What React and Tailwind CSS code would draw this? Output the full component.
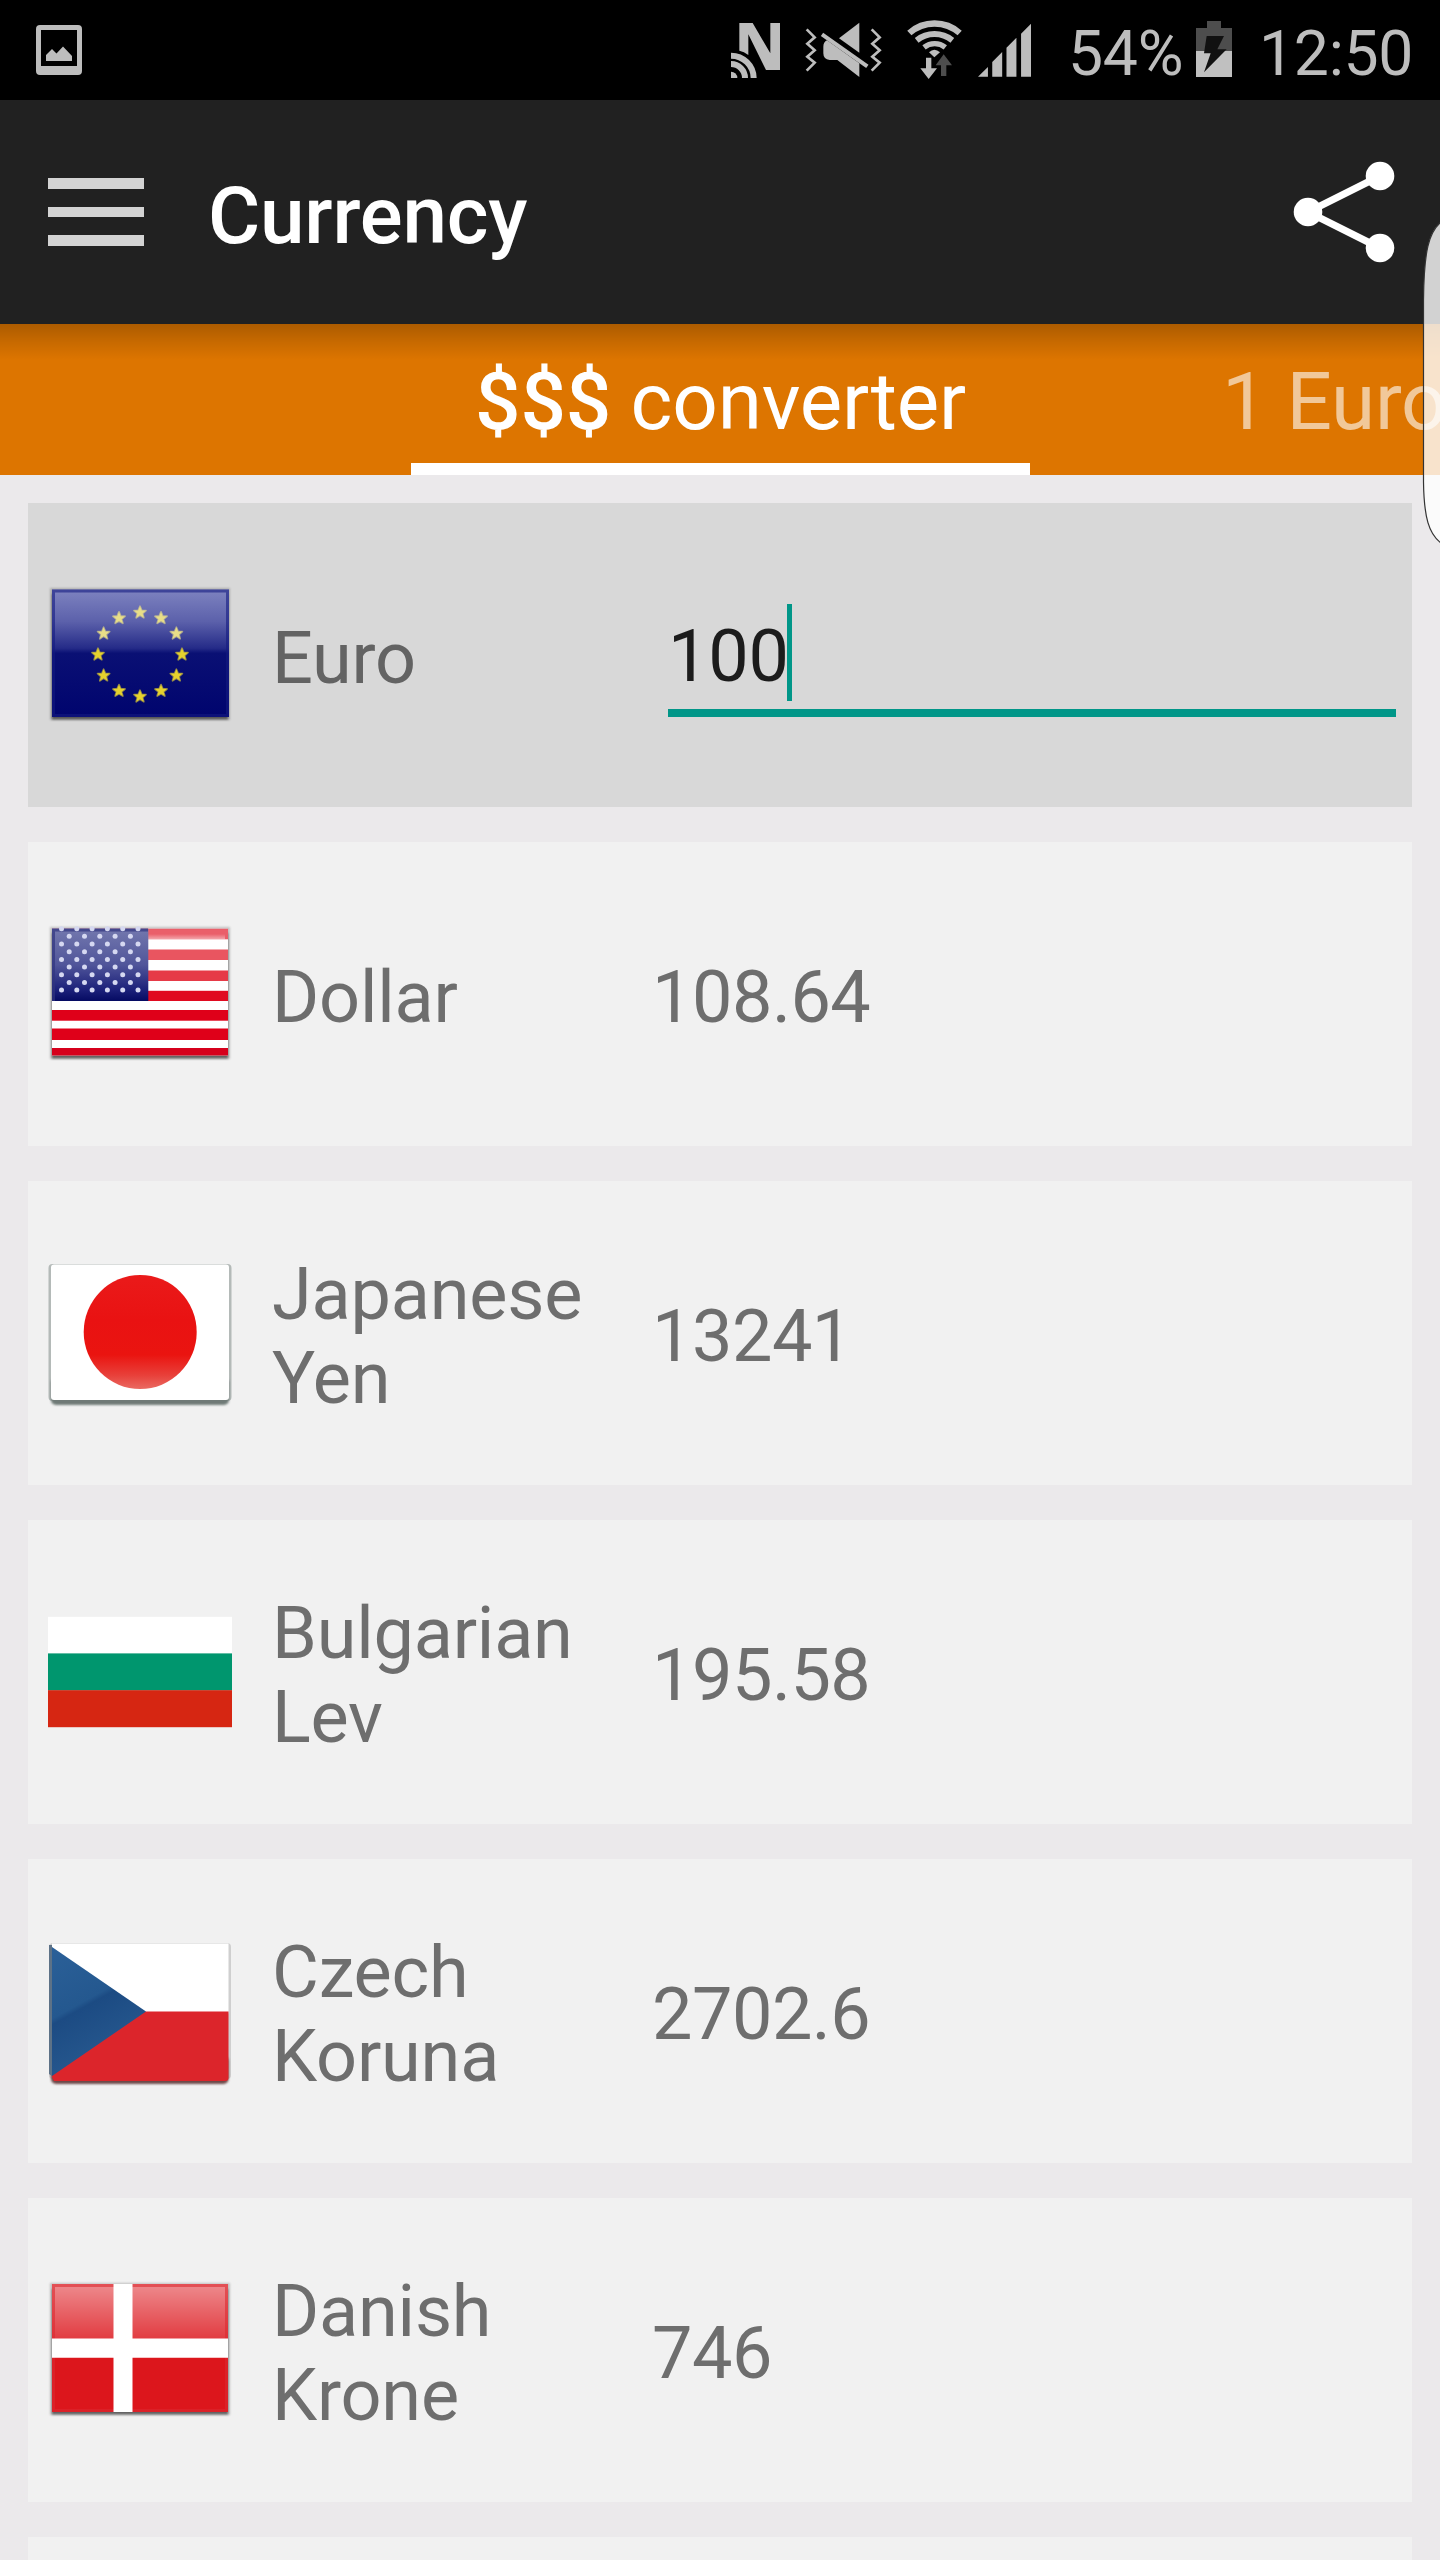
import { useState } from "react";

function ScreenshotIcon() {
  return (
    <svg className="h-[50px] w-[46px]" viewBox="0 0 46 50">
      <path fill="#bdbdbd" fillRule="evenodd" d="M4 0H42Q46 0 46 4V46Q46 50 42 50H4Q0 50 0 46V4Q0 0 4 0ZM5 5V41H41V5Z" />
      <path fill="#bdbdbd" d="M10 36V30L16 24L20.500 28.500L27 21.500L36 31V36Z" />
    </svg>
  );
}

function NfcIcon() {
  return (
    <svg className="h-[100px] w-[49px]" viewBox="93 0 147 300" fill="#bdbdbd">
      <path d="M118 69H158L211 160V69H240V210H198L145 103V165Q132 155 118 152Z" />
      <path d="M93 215A19 19 0 0 1 112 234H93Z" />
      <path d="M93 192A42 42 0 0 1 135 234M93 167A68 68 0 0 1 161 234" fill="none" stroke="#bdbdbd" strokeWidth="18" />
    </svg>
  );
}

function MuteIcon() {
  return (
    <svg className="h-[100px] w-[77px]" viewBox="314 0 231 300" fill="#bdbdbd">
      <path d="M319 88L343 112L321 131L343 151L321 170L343 188L319 212M514 88L538 112L516 131L538 151L516 170L538 188L514 212" fill="none" stroke="#bdbdbd" strokeWidth="8" />
      <path d="M477 68V158L416 115Z" />
      <path d="M380 121L477 190V231L411 180H388Q369 178 369 160V140Q369 126 380 121Z" />
      <path d="M365 103L501 199" stroke="#bdbdbd" strokeWidth="12" />
    </svg>
  );
}

function WifiIcon() {
  return (
    <svg className="h-[100px] w-[55px]" viewBox="620 0 165 300" fill="#bdbdbd">
      <g fill="none" stroke="#bdbdbd" strokeWidth="19">
        <path d="M627 99A114 114 0 0 1 778 99" />
        <path d="M649 121A86 86 0 0 1 756 121" strokeWidth="18" />
        <path d="M671 142A52 52 0 0 1 735 142" strokeWidth="16" />
      </g>
      <path d="M686 157Q702 142 719 157L702 172Z" />
      <path d="M677 173H693V205H710L685 237L660 205H677Z" />
      <path fill="#4d4d4d" d="M730 163L755 196H738V228H722V196H706Z" />
    </svg>
  );
}

function SignalIcon() {
  return (
    <svg className="h-[100px] w-[53px]" viewBox="833 0 160 300" fill="#bdbdbd">
      <path d="M833 231L863 201V231ZM876 231V186L906 156V231ZM919 231V143L949 113V231ZM963 231V101L993 71V231Z" />
    </svg>
  );
}

function BatteryIcon() {
  return (
    <svg className="h-[100px] w-[36px]" viewBox="468 0 108 300">
      <path fill="#4d4d4d" d="M501 63H543V84H576V153H468V84H501Z" />
      <path fill="#c0c0c0" d="M468 153H576V231H468Z" />
      <path fill="#111111" d="M500 108H552L532 148H560L492 217L512 160H492Z" />
    </svg>
  );
}

function StatusBar() {
  return (
    <div className="flex h-[100px] shrink-0 items-center bg-black pl-9 text-[62.500px] text-[#bdbdbd]">
      <ScreenshotIcon />
      <div className="ml-auto flex items-center">
        <NfcIcon />
        <div className="ml-[25px] flex"><MuteIcon /></div>
        <div className="ml-[25px] flex"><WifiIcon /></div>
        <div className="ml-4 flex"><SignalIcon /></div>
        <span className="ml-[37px] w-[128px] pt-2 leading-none tracking-[-0.300px] whitespace-nowrap">54%</span>
        <BatteryIcon />
        <span className="ml-[27px] w-[181px] pt-2 leading-none tracking-[-0.300px] whitespace-nowrap">12:50</span>
      </div>
    </div>
  );
}

function AppBar() {
  return (
    <header className="flex h-[224px] shrink-0 items-center bg-[#212121] px-12">
      <button type="button" aria-label="Menu" className="flex w-24 flex-col gap-[18px]">
        <span className="h-[10.500px] w-full bg-[#d3d3d3]" />
        <span className="h-[10.500px] w-full bg-[#d3d3d3]" />
        <span className="h-[10.500px] w-full bg-[#d3d3d3]" />
      </button>
      <h1 className="ml-16 pt-2 text-[80px] leading-none font-medium tracking-[-0.200px] text-white">Currency</h1>
      <button type="button" aria-label="Share" className="-mr-[3px] ml-auto">
        <svg className="h-[102px] w-[102px]" viewBox="0 0 102 102" fill="white">
          <path d="M87 15L15 51L87 87" fill="none" stroke="white" strokeWidth="7" />
          <circle cx="15" cy="51" r="14.300" />
          <circle cx="87" cy="15" r="14.300" />
          <circle cx="87" cy="87" r="14.300" />
        </svg>
      </button>
    </header>
  );
}

function Tabs() {
  return (
    <nav className="relative flex h-[151px] shrink-0 overflow-hidden bg-[#dd7500] pl-[411px] text-[80px] leading-none whitespace-nowrap">
      <div className="absolute inset-x-0 top-0 h-9 bg-linear-to-b from-black/22 via-black/10 to-transparent" />
      <div className="w-[619px] shrink-0 border-b-[12px] border-white pt-[38px] text-center tracking-[-0.200px] text-white">
        <span className="font-medium">$$$</span> converter
      </div>
      <div className="ml-[192px] shrink-0 pt-[38px] tracking-[-0.200px] text-white/60">1 Euro</div>
    </nav>
  );
}

const STAR = "M0 -6.200L1.800 -2L6 -1.900L2.600 1L3.800 5.200L0 2.800L-3.800 5.200L-2.600 1L-6 -1.900L-1.800 -2Z";

function EuFlag() {
  return (
    <>
      <defs>
        <linearGradient id="euBlue" x1="0" y1="0" x2="0" y2="1">
          <stop offset="0" stopColor="#7e83c0" />
          <stop offset="0.250" stopColor="#5c61ab" />
          <stop offset="0.460" stopColor="#252b88" />
          <stop offset="0.500" stopColor="#0a1074" />
          <stop offset="1" stopColor="#00046e" />
        </linearGradient>
      </defs>
      <rect x="4" y="9.500" width="177" height="127.500" fill="url(#euBlue)" />
      <rect x="5.500" y="11" width="174" height="124.500" fill="none" stroke="#141a80" strokeOpacity="0.600" strokeWidth="3" />
      {Array.from({ length: 12 }, (_, i) => {
        const a = (i * Math.PI) / 6;
        const x = 92 + 42 * Math.sin(a);
        const y = 74.500 - 42 * Math.cos(a);
        const fill = y < 60 ? "#e8de88" : "#e6d22e";
        return (
          <path
            key={i}
            d={STAR}
            fill={fill}
            stroke={fill}
            strokeOpacity="0.600"
            strokeWidth="1.800"
            strokeLinejoin="round"
            transform={`translate(${x} ${y})`}
          />
        );
      })}
    </>
  );
}

const RED_STRIPES = [
  [9.700, 10.600, "#ea5f6a"],
  [30.500, 10.500, "#e95560"],
  [51.500, 10.500, "#e63a47"],
  [71.800, 10.200, "#e00a20"],
  [91, 10.700, "#df0019"],
  [109.500, 11.500, "#df0019"],
  [129, 7.500, "#d6001c"],
];

function UsFlag() {
  return (
    <>
      <defs>
        <linearGradient id="canton" x1="0" y1="0" x2="0" y2="1">
          <stop offset="0" stopColor="#7378ae" />
          <stop offset="0.500" stopColor="#50559a" />
          <stop offset="0.850" stopColor="#1b2079" />
          <stop offset="1" stopColor="#050a62" />
        </linearGradient>
        <linearGradient id="stripeFade" x1="0" y1="0" x2="0" y2="1">
          <stop offset="0" stopColor="white" stopOpacity="0" />
          <stop offset="0.500" stopColor="white" stopOpacity="0" />
          <stop offset="1" stopColor="white" stopOpacity="0.450" />
        </linearGradient>
      </defs>
      <rect x="4" y="9.700" width="176" height="126.800" fill="white" />
      {RED_STRIPES.map(([y, h, fill]) => (
        <rect key={y} x="4" y={y} width="176" height={h} fill={fill} />
      ))}
      <rect x="100" y="9.700" width="77" height="10.600" fill="url(#stripeFade)" />
      <rect x="4" y="9.700" width="96.300" height="72.300" fill="url(#canton)" />
      <path d="M5.500 82V11H100" fill="none" stroke="#30357f" strokeOpacity="0.700" strokeWidth="3" />
      {Array.from({ length: 9 }, (_, row) =>
        Array.from({ length: row % 2 ? 5 : 6 }, (_, col) => (
          <circle
            key={`${row}-${col}`}
            cx={13.500 + col * 15.300 + (row % 2 ? 7.700 : 0)}
            cy={9.700 + row * 7.670}
            r="2.500"
            fill="#d5d8f1"
          />
        ))
      )}
    </>
  );
}

function JapanFlag() {
  return (
    <>
      <defs>
        <linearGradient id="sun" x1="0" y1="0" x2="0" y2="1">
          <stop offset="0" stopColor="#ea1a1a" />
          <stop offset="0.400" stopColor="#e91212" />
          <stop offset="0.700" stopColor="#ea1410" />
          <stop offset="0.880" stopColor="#e8403a" />
          <stop offset="1" stopColor="#ea6a62" />
        </linearGradient>
      </defs>
      <rect x="0.500" y="6" width="183" height="137" rx="4" fill="#b4bab8" />
      <rect x="3" y="120" width="178" height="27" rx="5" fill="#6f7a77" filter="url(#soft)" />
      <rect x="3" y="6.500" width="178" height="135.500" rx="3" fill="white" />
      <ellipse cx="92.200" cy="74" rx="56.500" ry="57" fill="url(#sun)" />
    </>
  );
}

function BulgariaFlag() {
  return (
    <>
      <rect y="19.800" width="184" height="37" fill="white" />
      <rect y="56.400" width="184" height="37" fill="#00966e" />
      <rect y="93.200" width="184" height="37" fill="#d62612" />
    </>
  );
}

function CzechFlag() {
  return (
    <>
      <defs>
        <linearGradient id="czBlue" x1="0" y1="0" x2="0.400" y2="1">
          <stop offset="0" stopColor="#2b6098" />
          <stop offset="0.480" stopColor="#24588f" />
          <stop offset="0.520" stopColor="#1c4b83" />
          <stop offset="1" stopColor="#285a90" />
        </linearGradient>
      </defs>
      <rect x="1" y="7" width="182" height="136" rx="4" fill="#cfcfcf" />
      <rect x="3" y="120" width="177.500" height="28" rx="5" fill="#6e4a48" filter="url(#soft)" />
      <path d="M1 9H4V140L1 138Z" fill="#5d7287" />
      <rect x="4" y="7.500" width="176.500" height="70" fill="white" />
      <path d="M4 75.500H180.500V142Q180.500 145 177 145H6L4 141Z" fill="#dc252b" />
      <path d="M4 11L98 75.500L4 140Z" fill="url(#czBlue)" />
    </>
  );
}

function DenmarkFlag() {
  return (
    <>
      <defs>
        {/* light falling over the top half */}
        <linearGradient id="dkGloss" x1="0" y1="0" x2="0" y2="1">
          <stop offset="0" stopColor="white" stopOpacity="0.500" />
          <stop offset="1" stopColor="white" stopOpacity="0.150" />
        </linearGradient>
      </defs>
      <rect x="4" y="9" width="176" height="128" fill="#dc161c" />
      <rect x="4" y="9" width="176" height="57" fill="url(#dkGloss)" />
      <rect x="5.500" y="10.500" width="173" height="125" fill="none" stroke="#dc2a30" strokeOpacity="0.600" strokeWidth="3" />
      <path d="M65.500 9H84.500V137H65.500ZM4 63.500H180V82.700H4Z" fill="white" />
    </>
  );
}

const ROWS = [
  { name: "Dollar", value: "108.64", Flag: UsFlag, shadow: true },
  { name: "Japanese Yen", value: "13241", Flag: JapanFlag },
  { name: "Bulgarian Lev", value: "195.58", Flag: BulgariaFlag },
  { name: "Czech Koruna", value: "2702.6", Flag: CzechFlag },
  { name: "Danish Krone", value: "746", Flag: DenmarkFlag, shadow: true },
];

function FlagImage({ Flag, shadow }) {
  return (
    <svg className="h-[150px] w-[184px] shrink-0" viewBox="0 0 184 150">
      <defs>
        <filter id="soft" x="-10%" y="-10%" width="120%" height="120%">
          <feGaussianBlur stdDeviation="1.200" />
        </filter>
      </defs>
      {shadow && (
        <>
          <rect x="2" y="8" width="180" height="132" fill="black" fillOpacity="0.200" filter="url(#soft)" />
          <rect x="4" y="14" width="176" height="125.500" fill="black" fillOpacity="0.500" filter="url(#soft)" />
        </>
      )}
      <Flag />
    </svg>
  );
}

function CurrencyRow({ name, value, Flag, shadow }) {
  return (
    <li className="flex h-[304px] shrink-0 items-center bg-[#f1f1f1] pl-5">
      <FlagImage Flag={Flag} shadow={shadow} />
      <span className="ml-10 w-[340px] pt-2">{name}</span>
      <span className="ml-10 pt-2 tracking-[-0.500px]">{value}</span>
    </li>
  );
}

export default function App() {
  const [amount] = useState("100");

  return (
    <div className="relative flex h-[2560px] w-[1440px] flex-col overflow-hidden bg-[#ebe9eb] font-['Roboto',sans-serif]">
      <StatusBar />
      <AppBar />
      <Tabs />
      <ul className="flex flex-col gap-[35px] px-7 pt-7 text-[72px] leading-[84.500px] tracking-[-0.200px] text-[#6e6e6e]">
        <li className="flex h-[304px] shrink-0 items-center bg-[#d8d8d8] pl-5 text-[#636363]">
          <FlagImage Flag={EuFlag} shadow />
          <span className="ml-10 w-[340px] pt-2">Euro</span>
          <div className="mt-[11px] ml-14 flex h-[113px] w-[728px] items-start border-b-[8.500px] border-[#009688]">
            <span className="pt-[10.500px] text-[#1c1c1c]">{amount}</span>
            <span className="-ml-[1.500px] h-[97px] w-[5px] bg-[#009688]" />
          </div>
        </li>
        {ROWS.map((row) => (
          <CurrencyRow key={row.name} {...row} />
        ))}
        <li className="h-[304px] shrink-0 bg-[#f1f1f1]" />
      </ul>

      {/* edge panel handle */}
      <svg className="absolute top-[220px] right-0 h-[326px] w-[18px]" viewBox="0 0 18 326">
        <path
          d="M19 2C7 12 2 30 1.500 80V262C2 298 7 314 19 323"
          fill="white"
          fillOpacity="0.800"
          stroke="#333333"
          strokeWidth="1.200"
        />
      </svg>
    </div>
  );
}
